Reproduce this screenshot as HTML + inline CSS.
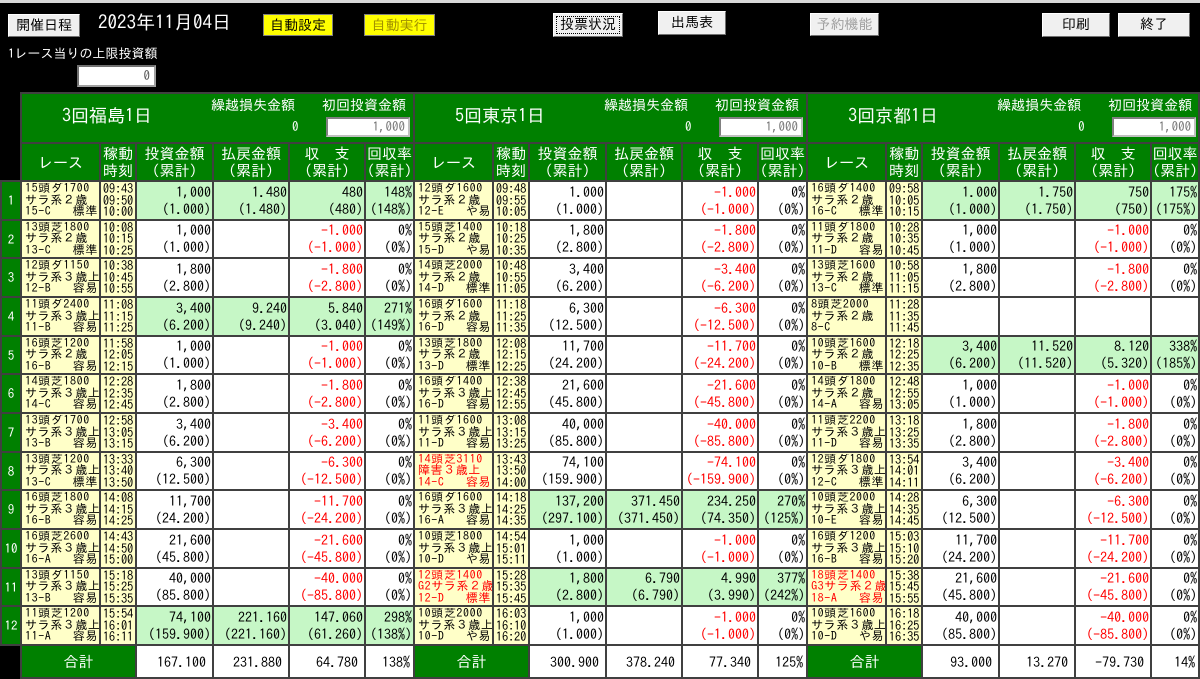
<!DOCTYPE html>
<html><head><meta charset="utf-8">
<style>
*{box-sizing:border-box;margin:0;padding:0}
html,body{width:1200px;height:679px;background:#000;overflow:hidden;font-family:"IPAGothic","Liberation Sans","Noto Sans CJK JP",sans-serif;}
.topline{position:absolute;left:0;top:0;width:1200px;height:3px;background:#d8d8d8}
.btn{position:absolute;height:23px;background:#f0f0f0;border:1px solid #fff;border-right-color:#707070;border-bottom-color:#707070;font-size:14px;line-height:21px;text-align:center;color:#000}
.yel{background:#ffff00;border:1px solid #808080}
.date{position:absolute;left:98px;top:13px;color:#fff;font-size:19px}
.lbl{position:absolute;left:8px;top:47px;color:#fff;font-size:13px}
.inp{position:absolute;background:#fff;border:2px solid #a0a0a0;border-top-color:#707070;border-left-color:#707070;text-align:right;font-size:13px;color:#555;padding-right:4px}
table{position:absolute;left:0;top:92px;border-collapse:collapse;table-layout:fixed;width:1198px}
td{border:2px solid #404040;padding:0;overflow:hidden;white-space:nowrap;vertical-align:middle}
.hd1{height:50px}.hd2{height:38px}
.vh{background:#008000;color:#fff;position:relative}
.vh .vn{position:absolute;left:40px;top:13px;font-size:18px}
.vh .k{position:absolute;left:189px;top:4px;font-size:14px}
.vh .z{position:absolute;left:270px;top:26px;font-size:13px}
.vh .s{position:absolute;left:300px;top:4px;font-size:14px}
.vh .ib{position:absolute;left:304px;top:23px;width:84px;height:20px;background:#fff;border:2px solid #c0c0c0;border-top-color:#808080;border-left-color:#808080;color:#777;font-size:13px;text-align:right;padding-right:3px;line-height:16px}
.ch{background:#008000;color:#fff;font-size:15px;text-align:center;line-height:17px}
.ch2{font-size:15px}
.rn{background:#008000;color:#fff;font-size:13px;text-align:center}
.y{background:#ffffc8;font-size:12px;line-height:11.6px;padding-left:3px;color:#000;letter-spacing:.6px}
.y>div,.t>div{height:35px;overflow:hidden;padding-top:0}
.y.r{color:#f00}
.y b{float:right;font-weight:normal;padding-right:1px}
.t{background:#ffffc8;font-size:12.5px;line-height:11.6px;text-align:center;letter-spacing:-.2px}
.n{background:#fff;font-size:14px;line-height:17px;text-align:right;padding-right:1px;color:#000}
.n.g{background:#c6f7c6}
.n.r{color:#f00}
.blk{background:#000;border:none}
.tot{background:#008000;color:#fff;font-size:15px;text-align:center}
.tn{background:#fff;font-size:14px;text-align:right;padding-right:6px}
</style></head><body>
<div class="topline"></div>
<div class="btn" style="left:8px;top:14px;width:72px">開催日程</div>
<div class="date">2023年11月04日</div>
<div class="btn yel" style="left:263px;top:14px;width:70px;height:22px">自動設定</div>
<div class="btn yel" style="left:364px;top:14px;width:71px;height:22px;color:#a09000">自動実行</div>
<div class="btn" style="left:553px;top:13px;width:70px;height:24px;outline:1px dotted #000;outline-offset:-4px">投票状況</div>
<div class="btn" style="left:658px;top:11px;width:68px;height:24px">出馬表</div>
<div class="btn" style="left:810px;top:13px;width:69px;height:23px;color:#a0a0a0">予約機能</div>
<div class="btn" style="left:1042px;top:13px;width:68px;height:24px">印刷</div>
<div class="btn" style="left:1118px;top:13px;width:72px;height:24px">終了</div>
<div class="lbl">1レース当りの上限投資額</div>
<div class="inp" style="left:77px;top:65px;width:79px;height:22px;line-height:18px">0</div>

<table>
<colgroup><col style="width:20px">
<col style="width:79px"><col style="width:36px"><col style="width:77px"><col style="width:76px"><col style="width:76px"><col style="width:49px">
<col style="width:79px"><col style="width:36px"><col style="width:77px"><col style="width:76px"><col style="width:76px"><col style="width:49px">
<col style="width:79px"><col style="width:36px"><col style="width:77px"><col style="width:76px"><col style="width:76px"><col style="width:48px">
</colgroup>
<tr class="hd1"><td class="blk"></td>
<td colspan="6" class="vh"><span class="vn">3回福島1日</span><span class="k">繰越損失金額</span><span class="z">0</span><span class="s">初回投資金額</span><span class="ib">1,000</span></td>
<td colspan="6" class="vh"><span class="vn">5回東京1日</span><span class="k">繰越損失金額</span><span class="z">0</span><span class="s">初回投資金額</span><span class="ib">1,000</span></td>
<td colspan="6" class="vh"><span class="vn">3回京都1日</span><span class="k">繰越損失金額</span><span class="z">0</span><span class="s">初回投資金額</span><span class="ib">1,000</span></td>
</tr>
<tr class="hd2"><td class="blk"></td>
<td class="ch ch2">レース</td><td class="ch">稼動<br>時刻</td><td class="ch">投資金額<br>(累計)</td><td class="ch">払戻金額<br>(累計)</td><td class="ch">収　支<br>(累計)</td><td class="ch">回収率<br>(累計)</td>
<td class="ch ch2">レース</td><td class="ch">稼動<br>時刻</td><td class="ch">投資金額<br>(累計)</td><td class="ch">払戻金額<br>(累計)</td><td class="ch">収　支<br>(累計)</td><td class="ch">回収率<br>(累計)</td>
<td class="ch ch2">レース</td><td class="ch">稼動<br>時刻</td><td class="ch">投資金額<br>(累計)</td><td class="ch">払戻金額<br>(累計)</td><td class="ch">収　支<br>(累計)</td><td class="ch">回収率<br>(累計)</td>
</tr>

<tr style="height:39px"><td class="rn">1</td>
<td class="y"><div>15頭ダ1700<br>サラ系２歳<br>15-C<b>標準</b></div></td><td class="t"><div>09:43<br>09:50<br>10:00</div></td><td class="n g">1,000<br>(1.000)</td><td class="n g">1.480<br>(1.480)</td><td class="n g">480<br>(480)</td><td class="n g">148%<br>(148%)</td>
<td class="y"><div>12頭ダ1600<br>サラ系２歳<br>12-E<b>や易</b></div></td><td class="t"><div>09:48<br>09:55<br>10:05</div></td><td class="n">1.000<br>(1.000)</td><td class="n"></td><td class="n r">-1.000<br>(-1.000)</td><td class="n">0%<br>(0%)</td>
<td class="y"><div>16頭ダ1400<br>サラ系２歳<br>16-C<b>標準</b></div></td><td class="t"><div>09:58<br>10:05<br>10:15</div></td><td class="n g">1.000<br>(1.000)</td><td class="n g">1.750<br>(1.750)</td><td class="n g">750<br>(750)</td><td class="n g">175%<br>(175%)</td>
</tr>
<tr style="height:38px"><td class="rn">2</td>
<td class="y"><div>13頭芝1800<br>サラ系２歳<br>13-C<b>標準</b></div></td><td class="t"><div>10:08<br>10:15<br>10:25</div></td><td class="n">1,000<br>(1.000)</td><td class="n"></td><td class="n r">-1.000<br>(-1.000)</td><td class="n">0%<br>(0%)</td>
<td class="y"><div>15頭芝1400<br>サラ系２歳<br>15-D<b>や易</b></div></td><td class="t"><div>10:18<br>10:25<br>10:35</div></td><td class="n">1,800<br>(2.800)</td><td class="n"></td><td class="n r">-1.800<br>(-2.800)</td><td class="n">0%<br>(0%)</td>
<td class="y"><div>11頭ダ1800<br>サラ系２歳<br>11-D<b>容易</b></div></td><td class="t"><div>10:28<br>10:35<br>10:45</div></td><td class="n">1,000<br>(1.000)</td><td class="n"></td><td class="n r">-1.000<br>(-1.000)</td><td class="n">0%<br>(0%)</td>
</tr>
<tr style="height:39px"><td class="rn">3</td>
<td class="y"><div>12頭ダ1150<br>サラ系３歳上<br>12-B<b>容易</b></div></td><td class="t"><div>10:38<br>10:45<br>10:55</div></td><td class="n">1,800<br>(2.800)</td><td class="n"></td><td class="n r">-1.800<br>(-2.800)</td><td class="n">0%<br>(0%)</td>
<td class="y"><div>14頭芝2000<br>サラ系２歳<br>14-D<b>標準</b></div></td><td class="t"><div>10:48<br>10:55<br>11:05</div></td><td class="n">3,400<br>(6.200)</td><td class="n"></td><td class="n r">-3.400<br>(-6.200)</td><td class="n">0%<br>(0%)</td>
<td class="y"><div>13頭芝1600<br>サラ系２歳<br>13-C<b>標準</b></div></td><td class="t"><div>10:58<br>11:05<br>11:15</div></td><td class="n">1,800<br>(2.800)</td><td class="n"></td><td class="n r">-1.800<br>(-2.800)</td><td class="n">0%<br>(0%)</td>
</tr>
<tr style="height:39px"><td class="rn">4</td>
<td class="y"><div>11頭ダ2400<br>サラ系３歳上<br>11-B<b>容易</b></div></td><td class="t"><div>11:08<br>11:15<br>11:25</div></td><td class="n g">3,400<br>(6.200)</td><td class="n g">9.240<br>(9.240)</td><td class="n g">5.840<br>(3.040)</td><td class="n g">271%<br>(149%)</td>
<td class="y"><div>16頭ダ1600<br>サラ系２歳<br>16-D<b>容易</b></div></td><td class="t"><div>11:18<br>11:25<br>11:35</div></td><td class="n">6,300<br>(12.500)</td><td class="n"></td><td class="n r">-6.300<br>(-12.500)</td><td class="n">0%<br>(0%)</td>
<td class="y"><div>8頭芝2000<br>サラ系２歳<br>8-C</div></td><td class="t"><div>11:28<br>11:35<br>11:45</div></td><td class="n"></td><td class="n"></td><td class="n"></td><td class="n"></td>
</tr>
<tr style="height:38px"><td class="rn">5</td>
<td class="y"><div>16頭芝1200<br>サラ系２歳<br>16-B<b>容易</b></div></td><td class="t"><div>11:58<br>12:05<br>12:15</div></td><td class="n">1,000<br>(1.000)</td><td class="n"></td><td class="n r">-1.000<br>(-1.000)</td><td class="n">0%<br>(0%)</td>
<td class="y"><div>13頭芝1800<br>サラ系２歳<br>13-D<b>標準</b></div></td><td class="t"><div>12:08<br>12:15<br>12:25</div></td><td class="n">11,700<br>(24.200)</td><td class="n"></td><td class="n r">-11.700<br>(-24.200)</td><td class="n">0%<br>(0%)</td>
<td class="y"><div>10頭芝1600<br>サラ系２歳<br>10-B<b>標準</b></div></td><td class="t"><div>12:18<br>12:25<br>12:35</div></td><td class="n g">3,400<br>(6.200)</td><td class="n g">11.520<br>(11.520)</td><td class="n g">8.120<br>(5.320)</td><td class="n g">338%<br>(185%)</td>
</tr>
<tr style="height:39px"><td class="rn">6</td>
<td class="y"><div>14頭芝1800<br>サラ系３歳上<br>14-C<b>容易</b></div></td><td class="t"><div>12:28<br>12:35<br>12:45</div></td><td class="n">1,800<br>(2.800)</td><td class="n"></td><td class="n r">-1.800<br>(-2.800)</td><td class="n">0%<br>(0%)</td>
<td class="y"><div>16頭ダ1400<br>サラ系３歳上<br>16-D<b>容易</b></div></td><td class="t"><div>12:38<br>12:45<br>12:55</div></td><td class="n">21,600<br>(45.800)</td><td class="n"></td><td class="n r">-21.600<br>(-45.800)</td><td class="n">0%<br>(0%)</td>
<td class="y"><div>14頭ダ1800<br>サラ系２歳<br>14-A<b>容易</b></div></td><td class="t"><div>12:48<br>12:55<br>13:05</div></td><td class="n">1,000<br>(1.000)</td><td class="n"></td><td class="n r">-1.000<br>(-1.000)</td><td class="n">0%<br>(0%)</td>
</tr>
<tr style="height:39px"><td class="rn">7</td>
<td class="y"><div>13頭ダ1700<br>サラ系３歳上<br>13-B<b>容易</b></div></td><td class="t"><div>12:58<br>13:05<br>13:15</div></td><td class="n">3,400<br>(6.200)</td><td class="n"></td><td class="n r">-3.400<br>(-6.200)</td><td class="n">0%<br>(0%)</td>
<td class="y"><div>11頭ダ1600<br>サラ系３歳上<br>11-D<b>容易</b></div></td><td class="t"><div>13:08<br>13:15<br>13:25</div></td><td class="n">40,000<br>(85.800)</td><td class="n"></td><td class="n r">-40.000<br>(-85.800)</td><td class="n">0%<br>(0%)</td>
<td class="y"><div>11頭芝2200<br>サラ系３歳上<br>11-D<b>容易</b></div></td><td class="t"><div>13:18<br>13:25<br>13:35</div></td><td class="n">1,800<br>(2.800)</td><td class="n"></td><td class="n r">-1.800<br>(-2.800)</td><td class="n">0%<br>(0%)</td>
</tr>
<tr style="height:38px"><td class="rn">8</td>
<td class="y"><div>13頭芝1200<br>サラ系３歳上<br>13-C<b>標準</b></div></td><td class="t"><div>13:33<br>13:40<br>13:50</div></td><td class="n">6,300<br>(12.500)</td><td class="n"></td><td class="n r">-6.300<br>(-12.500)</td><td class="n">0%<br>(0%)</td>
<td class="y r"><div>14頭芝3110<br>障害３歳上<br>14-C<b>容易</b></div></td><td class="t"><div>13:43<br>13:50<br>14:00</div></td><td class="n">74,100<br>(159.900)</td><td class="n"></td><td class="n r">-74.100<br>(-159.900)</td><td class="n">0%<br>(0%)</td>
<td class="y"><div>12頭ダ1800<br>サラ系３歳上<br>12-C<b>標準</b></div></td><td class="t"><div>13:54<br>14:01<br>14:11</div></td><td class="n">3,400<br>(6.200)</td><td class="n"></td><td class="n r">-3.400<br>(-6.200)</td><td class="n">0%<br>(0%)</td>
</tr>
<tr style="height:39px"><td class="rn">9</td>
<td class="y"><div>16頭芝1800<br>サラ系３歳上<br>16-B<b>容易</b></div></td><td class="t"><div>14:08<br>14:15<br>14:25</div></td><td class="n">11,700<br>(24.200)</td><td class="n"></td><td class="n r">-11.700<br>(-24.200)</td><td class="n">0%<br>(0%)</td>
<td class="y"><div>16頭ダ1600<br>サラ系３歳上<br>16-A<b>容易</b></div></td><td class="t"><div>14:18<br>14:25<br>14:35</div></td><td class="n g">137,200<br>(297.100)</td><td class="n g">371.450<br>(371.450)</td><td class="n g">234.250<br>(74.350)</td><td class="n g">270%<br>(125%)</td>
<td class="y"><div>10頭芝2000<br>サラ系３歳上<br>10-E<b>容易</b></div></td><td class="t"><div>14:28<br>14:35<br>14:45</div></td><td class="n">6,300<br>(12.500)</td><td class="n"></td><td class="n r">-6.300<br>(-12.500)</td><td class="n">0%<br>(0%)</td>
</tr>
<tr style="height:39px"><td class="rn">10</td>
<td class="y"><div>16頭芝2600<br>サラ系３歳上<br>16-A<b>容易</b></div></td><td class="t"><div>14:43<br>14:50<br>15:00</div></td><td class="n">21,600<br>(45.800)</td><td class="n"></td><td class="n r">-21.600<br>(-45.800)</td><td class="n">0%<br>(0%)</td>
<td class="y"><div>10頭芝1800<br>サラ系３歳上<br>10-D<b>や易</b></div></td><td class="t"><div>14:54<br>15:01<br>15:11</div></td><td class="n">1,000<br>(1.000)</td><td class="n"></td><td class="n r">-1.000<br>(-1.000)</td><td class="n">0%<br>(0%)</td>
<td class="y"><div>16頭ダ1200<br>サラ系３歳上<br>16-B<b>容易</b></div></td><td class="t"><div>15:03<br>15:10<br>15:20</div></td><td class="n">11,700<br>(24.200)</td><td class="n"></td><td class="n r">-11.700<br>(-24.200)</td><td class="n">0%<br>(0%)</td>
</tr>
<tr style="height:38px"><td class="rn">11</td>
<td class="y"><div>13頭ダ1150<br>サラ系３歳上<br>13-B<b>容易</b></div></td><td class="t"><div>15:18<br>15:25<br>15:35</div></td><td class="n">40,000<br>(85.800)</td><td class="n"></td><td class="n r">-40.000<br>(-85.800)</td><td class="n">0%<br>(0%)</td>
<td class="y r"><div>12頭芝1400<br>G2サラ系２歳<br>12-D<b>標準</b></div></td><td class="t"><div>15:28<br>15:35<br>15:45</div></td><td class="n g">1,800<br>(2.800)</td><td class="n g">6.790<br>(6.790)</td><td class="n g">4.990<br>(3.990)</td><td class="n g">377%<br>(242%)</td>
<td class="y r"><div>18頭芝1400<br>G3サラ系２歳<br>18-A<b>容易</b></div></td><td class="t"><div>15:38<br>15:45<br>15:55</div></td><td class="n">21,600<br>(45.800)</td><td class="n"></td><td class="n r">-21.600<br>(-45.800)</td><td class="n">0%<br>(0%)</td>
</tr>
<tr style="height:39px"><td class="rn">12</td>
<td class="y"><div>11頭芝1200<br>サラ系３歳上<br>11-A<b>容易</b></div></td><td class="t"><div>15:54<br>16:01<br>16:11</div></td><td class="n g">74,100<br>(159.900)</td><td class="n g">221.160<br>(221.160)</td><td class="n g">147.060<br>(61.260)</td><td class="n g">298%<br>(138%)</td>
<td class="y"><div>10頭芝2000<br>サラ系３歳上<br>10-D<b>や易</b></div></td><td class="t"><div>16:03<br>16:10<br>16:20</div></td><td class="n">1,000<br>(1.000)</td><td class="n"></td><td class="n r">-1.000<br>(-1.000)</td><td class="n">0%<br>(0%)</td>
<td class="y"><div>10頭芝1600<br>サラ系３歳上<br>10-D<b>や易</b></div></td><td class="t"><div>16:18<br>16:25<br>16:35</div></td><td class="n">40,000<br>(85.800)</td><td class="n"></td><td class="n r">-40.000<br>(-85.800)</td><td class="n">0%<br>(0%)</td>
</tr>
<tr style="height:33px"><td class="blk"></td>
<td colspan="2" class="tot">合計</td><td class="tn">167.100</td><td class="tn">231.880</td><td class="tn">64.780</td><td class="tn" style="padding-right:3px">138%</td>
<td colspan="2" class="tot">合計</td><td class="tn">300.900</td><td class="tn">378.240</td><td class="tn">77.340</td><td class="tn" style="padding-right:3px">125%</td>
<td colspan="2" class="tot">合計</td><td class="tn">93.000</td><td class="tn">13.270</td><td class="tn">-79.730</td><td class="tn" style="padding-right:3px">14%</td>
</tr>
</table>
</body></html>
